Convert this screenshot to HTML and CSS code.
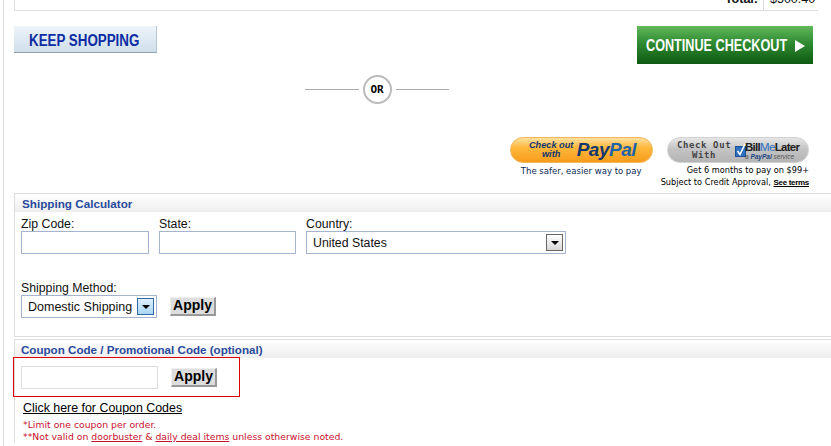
FILE: index.html
```html
<!DOCTYPE html>
<html>
<head>
    <meta charset="UTF-8">
    <meta name="viewport" content="width=device-width, initial-scale=1.0">
    <title>Shopping Cart</title>
    <link rel="stylesheet" href="styles.css">
</head>
<body>
    <div class="page">
        <div class="total-table">
            <div class="total-row">
                <div class="total-label">Total:</div>
                <div class="total-amount">$500.40</div>
            </div>
        </div>

        <div class="cart-buttons">
            <a class="keep-shopping"><span class="squeeze">KEEP SHOPPING</span></a>
            <a class="continue-checkout">
                <span class="squeeze continue-text">CONTINUE CHECKOUT</span>
                <svg width="10" height="12" viewBox="0 0 10 12"><polygon points="0,0 10,6 0,12" fill="#fff"/></svg>
            </a>
        </div>

        <div class="or-row">
            <div class="or-line"></div>
            <div class="or-circle">OR</div>
            <div class="or-line"></div>
        </div>

        <div class="alt-pay">
            <div class="pay-paypal">
                <a class="paypal-btn">
                    <span class="paypal-check">Check out<br>with</span>
                    <span class="paypal-logo">Pay<span class="paypal-pal">Pal</span></span>
                </a>
                <div class="paypal-note">The safer, easier way to pay</div>
            </div>
            <div class="pay-bml">
                <a class="bml-btn">
                    <span class="bml-check">Check Out<br>With</span>
                    <svg class="bml-box" width="11" height="15" viewBox="0 0 11 15">
                        <rect x="0.5" y="3.5" width="10" height="10" fill="#2f6fc0" stroke="#1c4f96"/>
                        <path d="M2.5 8 L5 11.5 L10 1" fill="none" stroke="#fff" stroke-width="1.6"/>
                    </svg>
                    <span class="bml-logo">
                        <span class="bml-name">Bill<span class="bml-me">Me</span>Later</span>
                        <span class="bml-service">a <b>PayPal</b> service</span>
                    </span>
                </a>
                <div class="bml-note">Get 6 months to pay on $99+</div>
                <div class="bml-note">Subject to Credit Approval, <a class="bml-terms">See terms</a></div>
            </div>
        </div>

        <div class="panel shipping-panel">
            <div class="panel-title">Shipping Calculator</div>
            <div class="ship-fields">
                <div class="field">
                    <label>Zip Code:</label>
                    <input type="text" class="text-input zip-input">
                </div>
                <div class="field">
                    <label>State:</label>
                    <input type="text" class="text-input state-input">
                </div>
                <div class="field">
                    <label>Country:</label>
                    <div class="select-box country-select">
                        <span>United States</span>
                        <span class="select-arrow"></span>
                    </div>
                </div>
            </div>
            <div class="method-field">
                <label>Shipping Method:</label>
                <div class="method-row">
                    <div class="select-box method-select">
                        <span>Domestic Shipping</span>
                        <span class="select-arrow arrow-active"></span>
                    </div>
                    <button type="button" class="apply-btn">Apply</button>
                </div>
            </div>
        </div>

        <div class="panel coupon-panel">
            <div class="panel-title">Coupon Code / Promotional Code (optional)</div>
            <div class="coupon-row">
                <input type="text" class="coupon-input">
                <button type="button" class="apply-btn">Apply</button>
            </div>
            <a class="coupon-link">Click here for Coupon Codes</a>
            <div class="coupon-note">*Limit one coupon per order.</div>
            <div class="coupon-note">**Not valid on <a>doorbuster</a> &amp; <a>daily deal items</a> unless otherwise noted.</div>
        </div>
    </div>
</body>
</html>
```

FILE: styles.css
```css
html, body {
    margin: 0;
    padding: 0;
    background: #fff;
    overflow: hidden;
}
body {
    font-family: "Liberation Sans", Arial, sans-serif;
    font-size: 12.3px;
    color: #111;
}
.page {
    margin-left: 3px;
    width: 827px;
    height: 446px;
    border-left: 1px solid #ddd;
    overflow: hidden;
}

/* order total, cut off by the top of the window */
.total-table {
    margin-left: 10px;
    width: 803px;
    height: 10px;
    border-left: 1px solid #ddd;
    border-bottom: 1px solid #ddd;
    overflow: hidden;
}
.total-row {
    display: flex;
    justify-content: flex-end;
    margin-top: -9px;
    height: 19px;
    line-height: 17px;
    font-size: 12.5px;
}
.total-label {
    font-weight: bold;
    padding-right: 5px;
}
.total-amount {
    width: 55px;
    padding-left: 6px;
    box-sizing: border-box;
    border-left: 1px solid #ddd;
}

.cart-buttons {
    display: flex;
    justify-content: space-between;
    align-items: flex-start;
    margin: 15px 18px 0 10px;
}
.squeeze {
    display: inline-block;
    white-space: nowrap;
    transform-origin: left center;
    font-size: 16px;
    font-weight: bold;
}
.keep-shopping {
    display: block;
    width: 143px;
    height: 27px;
    box-sizing: border-box;
    padding: 2px 0 0 15px;
    line-height: 26px;
    background: linear-gradient(#eef4f9, #cfdfeb);
    border-right: 1px solid #b5c5d2;
    border-bottom: 1px solid #8fa1b0;
    color: #0f2ca3;
}
.keep-shopping .squeeze {
    transform: scaleX(0.835);
}
.continue-checkout {
    display: flex;
    align-items: center;
    justify-content: space-between;
    width: 176px;
    height: 38px;
    box-sizing: border-box;
    padding: 2px 8px 0 9px;
    background: linear-gradient(#62b95a, #2f8a32 45%, #0e5a12);
    color: #fff;
}
.continue-text {
    width: 144px;
    transform: scaleX(0.79);
}

.or-row {
    display: flex;
    align-items: center;
    margin: 11px 0 0 301px;
    width: 144px;
}
.or-line {
    flex: 1;
    height: 1px;
    background: #aaa;
    margin-top: -1px;
}
.or-circle {
    width: 29px;
    height: 29px;
    box-sizing: border-box;
    margin: 0 4px;
    border: 2px solid #bbb;
    border-radius: 50%;
    text-align: center;
    font-family: "DejaVu Sans Mono", monospace;
    font-size: 11px;
    font-weight: bold;
    line-height: 25px;
    color: #000;
}

/* paypal and bill me later */
.alt-pay {
    display: flex;
    justify-content: flex-end;
    gap: 8px;
    margin: 33px 22px 0 0;
    height: 56px;
}
.paypal-btn, .bml-btn {
    display: flex;
    align-items: center;
    height: 26px;
    box-sizing: border-box;
    border-radius: 13px;
}
.paypal-btn {
    width: 143px;
    padding-left: 17px;
    gap: 2px;
    background: linear-gradient(#fde0a0, #fdb83c 40%, #f89c1c);
    border: 1px solid #f3b65c;
}
.paypal-check {
    width: 47px;
    white-space: nowrap;
    font-size: 9.2px;
    font-weight: bold;
    font-style: italic;
    line-height: 9px;
    text-align: center;
    color: #12376f;
}
.paypal-logo {
    font-size: 19px;
    font-weight: bold;
    font-style: italic;
    letter-spacing: -0.5px;
    color: #12376f;
}
.paypal-pal {
    color: #1f63a8;
}
.paypal-note {
    margin-top: 2px;
    text-align: center;
    font-family: "DejaVu Sans", sans-serif;
    font-size: 8.5px;
    line-height: 12px;
    color: #0c2a55;
}
.bml-btn {
    width: 142px;
    margin-left: auto;
    padding-left: 9px;
    background: linear-gradient(#e6e6e6, #c4c4c4 45%, #b4b4b4);
    border: 1px solid #d2d2d2;
}
.bml-check {
    width: 54px;
    white-space: nowrap;
    font-family: "DejaVu Sans Mono", monospace;
    font-size: 9px;
    font-weight: bold;
    letter-spacing: 0.6px;
    line-height: 10px;
    text-align: center;
    color: #444;
}
.bml-box {
    margin-left: 4px;
}
.bml-logo {
    display: flex;
    flex-direction: column;
    align-items: flex-start;
    margin-left: -1px;
}
.bml-name {
    font-size: 11.5px;
    font-weight: bold;
    letter-spacing: -0.7px;
    line-height: 12px;
    color: #222;
}
.bml-me {
    color: #2f6fc0;
    font-weight: normal;
}
.bml-service {
    font-size: 6.5px;
    font-style: italic;
    line-height: 7px;
    color: #555;
}
.bml-service b {
    color: #1c4585;
}
.bml-note {
    text-align: right;
    white-space: nowrap;
    font-family: "DejaVu Sans", sans-serif;
    font-size: 8.2px;
    line-height: 12px;
    color: #000;
}
.bml-btn + .bml-note {
    margin-top: 1px;
}
.bml-terms {
    font-family: "Liberation Sans", sans-serif;
    font-size: 8px;
    font-weight: bold;
    letter-spacing: -0.3px;
    text-decoration: underline;
}

/* panels */
.panel {
    margin-left: 10px;
    border-left: 1px solid #ddd;
    border-top: 1px solid #ddd;
}
.panel-title {
    height: 18px;
    padding-left: 7px;
    line-height: 20px;
    font-size: 11.7px;
    font-weight: bold;
    color: #2a4a9c;
    background: linear-gradient(#fff, #eee);
}
.shipping-panel {
    height: 142px;
    border-bottom: 1px solid #ddd;
}
.ship-fields {
    display: flex;
    gap: 10px;
    padding: 5px 0 0 6px;
}
.field label, .method-field label {
    display: block;
    padding-top: 1px;
    line-height: 13px;
}
.text-input {
    display: block;
    height: 23px;
    box-sizing: border-box;
    border: 1px solid #a5b3d1;
    background: #fff;
    margin: 0;
    padding: 0;
}
.zip-input {
    width: 128px;
}
.state-input {
    width: 137px;
}
.select-box {
    display: flex;
    align-items: center;
    justify-content: space-between;
    height: 23px;
    box-sizing: border-box;
    padding: 0 2px 0 6px;
    border: 1px solid #a5b3d1;
    background: #fff;
}
.country-select {
    width: 260px;
}
.method-select {
    width: 136px;
    font-size: 12.5px;
}
.select-arrow {
    display: flex;
    align-items: center;
    justify-content: center;
    width: 17px;
    height: 17px;
    box-sizing: border-box;
    border: 1px solid #666;
    background: linear-gradient(#fff, #d8d8d8);
}
.select-arrow::after {
    content: "";
    border-style: solid;
    border-width: 4px 4px 0;
    border-color: #000 transparent transparent;
}
.arrow-active {
    border-color: #2d6aa5;
    background: linear-gradient(#dff0fb, #a9d6f3);
}
.method-field {
    padding: 27px 0 0 6px;
}
.method-row {
    display: flex;
    align-items: center;
    gap: 13px;
}
.apply-btn {
    width: 46px;
    height: 19px;
    box-sizing: border-box;
    margin: 0;
    padding: 0 0 1px;
    border: none;
    border-top: 1px solid #eee;
    border-left: 1px solid #eee;
    border-right: 2px solid #999;
    border-bottom: 2px solid #999;
    background: #ddd;
    font-family: "Liberation Sans", sans-serif;
    font-size: 14px;
    font-weight: bold;
    line-height: 15px;
    color: #000;
}
.coupon-panel {
    margin-top: 2px;
}
.coupon-panel .panel-title {
    padding-left: 6px;
    font-size: 11.6px;
}
.coupon-row {
    display: flex;
    align-items: center;
    gap: 13px;
    width: 227px;
    height: 40px;
    box-sizing: border-box;
    margin: -1px 0 0 -2px;
    padding-left: 7px;
    border: 1px solid #e00000;
    position: relative;
}
.coupon-input {
    width: 137px;
    height: 23px;
    box-sizing: border-box;
    margin: 0;
    padding: 0;
    border: 1px solid #ddd;
}
.coupon-link {
    display: block;
    margin: 4px 0 0 8px;
    line-height: 15px;
    font-size: 12.4px;
    color: #000;
    text-decoration: underline;
}
.coupon-note {
    margin-left: 8px;
    font-family: "DejaVu Sans", sans-serif;
    font-size: 9.3px;
    line-height: 12px;
    color: #c8102e;
}
.coupon-link + .coupon-note {
    margin-top: 3px;
}
.coupon-note a {
    text-decoration: underline;
}
```
